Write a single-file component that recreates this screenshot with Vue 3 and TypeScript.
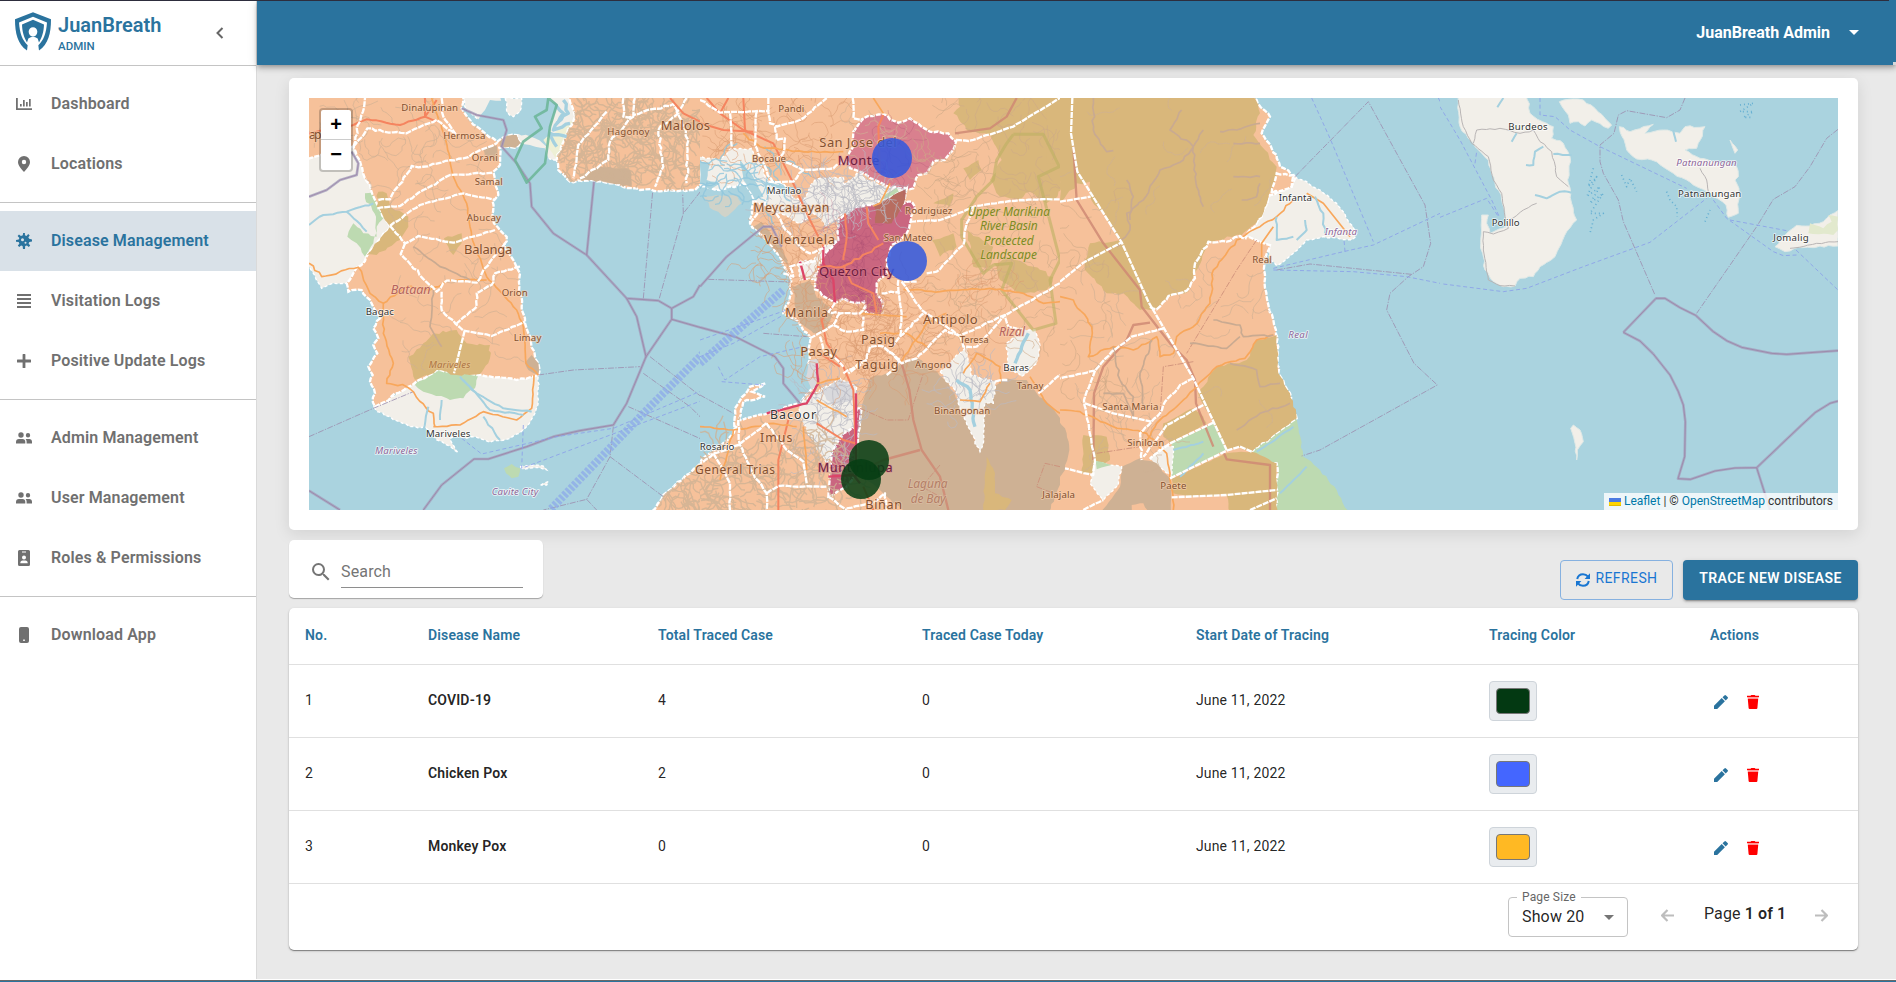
<script setup lang="ts">
type Shape = [kind: string, points: string, jitter?: number]
type Label = [text: string, x: number, y: number, width: number, size: number, tone?: string]
interface Tile { id: string; x: number; w: number; bg: string; areas: Shape[]; lines: Shape[]; labels: Label[]; texture: [number, number, number, number, number, string?][]; textureClip: string }

/* Deterministic noise keeps coastlines and streams stable between renders. */
function noise(a: number, b: number): number {
  const v = Math.sin(a * 12.9898 + b * 78.233) * 43758.5453
  return v - Math.floor(v) - 0.5
}

function trace(points: string, jitter: number, closed: boolean): string {
  const n = points.trim().split(/\s+/).map(Number)
  const p: [number, number][] = []
  for (let i = 0; i < n.length; i += 2) p.push([n[i], n[i + 1]])
  let d = `M${p[0][0]} ${p[0][1]}`
  const count = closed ? p.length : p.length - 1
  for (let i = 0; i < count; i++) {
    const a = p[i]
    const b = p[(i + 1) % p.length]
    const len = Math.hypot(b[0] - a[0], b[1] - a[1])
    const parts = jitter ? Math.max(1, Math.round(len / 14)) : 1
    for (let k = 1; k < parts; k++) {
      const x = a[0] + ((b[0] - a[0]) * k) / parts
      const y = a[1] + ((b[1] - a[1]) * k) / parts
      d += `L${(x + noise(x, y) * jitter).toFixed(1)} ${(y + noise(y, x) * jitter).toFixed(1)}`
    }
    d += `L${b[0]} ${b[1]}`
  }
  return closed ? d + 'Z' : d
}

function streams(x0: number, y0: number, x1: number, y1: number, count: number): string {
  let d = ''
  for (let i = 0; i < count; i++) {
    let x = x0 + (noise(i + x0, 3.1) + 0.5) * (x1 - x0)
    let y = y0 + (noise(i + y0, 7.7) + 0.5) * (y1 - y0)
    let dir = noise(i, x0 + y1) * 6.3
    d += `M${x.toFixed(0)} ${y.toFixed(0)}`
    for (let k = 0; k < 9; k++) {
      dir += noise(i * 3 + k, x0) * 1.9
      x += Math.cos(dir) * 12
      y += Math.sin(dir) * 12
      d += `L${x.toFixed(0)} ${y.toFixed(0)}`
    }
  }
  return d
}

const bataan = '40 40 522 40 515 85 540 120 585 160 622 185 650 168 680 165 692 188 675 203 628 203 630 255 610 275 615 300 625 345 608 365 612 430 650 470 645 505 670 540 690 580 688 620 695 680 705 715 715 760 735 830 745 850 745 885 680 900 560 885 440 870 255 980 248 960 255 940 240 905 248 885 235 860 262 820 250 795 265 775 250 745 270 715 240 660 215 630 175 635 170 610 300 440 260 370 190 200 40 240'
const hagonoy = '832 40 855 110 825 170 800 240 805 270 840 305 905 300 960 310 1050 330 1150 332 1215 330 1240 300 1250 40'
const cavite = '1080 1310 1120 1245 1200 1180 1245 1130 1270 1100 1270 1310'
const mainland = '-20 40 570 40 630 110 605 160 650 225 660 260 708 290 695 320 630 345 605 410 555 470 630 495 610 540 620 650 640 720 655 800 655 880 690 940 692 980 710 1015 575 1115 590 1140 650 1150 650 1310 -20 1310'

const tiles: Tile[] = [
  {
    id: 'west', x: 290, w: 1230, bg: '#aad3df',
    textureClip: [bataan, hagonoy, cavite].map((s) => trace(s, 7, true)).join(''),
    areas: [
      ['land', '40 235 190 200 260 370 300 440 170 610 130 610 95 625 57 560 40 560', 7],
      ['green', '225 340 265 335 290 400 260 440 250 490 225 530 200 490 172 470 190 430 220 460 260 470 258 410 225 355', 8],
      ['land', '250 980 440 870 745 885 745 960 735 1000 700 1050 660 1075 600 1087 545 1070 480 1075 505 1118 440 1080 410 1045 360 1040 300 1010 262 995', 8],
      ['green', '375 915 440 870 565 885 555 925 520 955 480 960 400 935', 8],
      ['land', '510 40 840 40 855 110 820 180 800 240 775 235 700 195 650 140 560 115 530 90', 10],
      ['water', '600 60 660 70 690 160 640 180 560 130 585 90', 8],
      ['water', '630 50 645 100 680 160 735 175 770 200 780 150 800 80 770 50', 8], ['land', '645 54 695 54 690 95 670 110 650 95', 8],
      ['water', '690 190 765 205 780 250 710 310 675 240', 3],
      ['marsh', '760 180 850 120 825 200 800 240', 4],
      ['orange', bataan, 7], ['orange', hagonoy, 7], ['orange', cavite, 7],
      ['tan', '265 335 290 340 300 380 355 410 355 440 330 480 260 525 230 525 300 440 260 380', 9],
      ['tan', '375 900 355 830 400 790 430 760 500 750 530 790 600 795 600 835 570 882 500 885 440 870', 9],
      ['tan', '462 475 515 460 515 490 490 525 475 500', 7],
      ['lake', '628 185 650 168 680 165 692 188 675 203 630 200', 5],
      ['lake', '580 205 620 195 625 245 585 225', 5], ['lake', '865 298 930 260 1020 270 1025 320 960 308 905 300', 8],
      ['lake', '705 850 725 825 745 850 745 885 715 870', 4],
      ['green', '642 1165 665 1152 690 1165 685 1190 665 1195 648 1180', 5],
      ['land', '690 1160 730 1155 760 1158 770 1170 740 1162 700 1168', 2], ['land', '752 1215 775 1205 770 1215', 2],
    ],
    lines: [
      ['water2', '790 70 820 100 790 150 840 130', 8], ['water2', '800 200 780 160 830 170', 8], ['water2', '820 60 835 100 800 130', 8],
      ['admin', '57 350 110 330 150 300 200 285 205 250 185 215'], ['admin', '515 85 560 105 640 120 650 150 635 200 680 250 720 310 725 380 790 460 890 525 1010 655 1105 662 1145 685 1210 650 1230 615'],
      ['admin', '890 525 912 305'], ['admin', '1010 655 1040 710 1068 830 1145 718 1145 685'], ['admin', '1145 718 1240 745'],
      ['admin', '1068 830 1010 970 970 1035 870 1052 790 1070 710 1100 595 1137 552 1137 455 1215 400 1290'], ['admin', '57 1232 150 1290'],
      ['park', '775 54 800 75 780 140 765 250 710 308 675 240 700 185 755 145 735 110 770 90 775 54'],
      ['thin', '57 1070 250 985 370 935'], ['thin', '745 885 850 870 1050 860'], ['thin', '1060 655 1088 335'], ['thin', '1108 655 1180 400 1235 330'], ['thin', '1180 400 1178 340'],
      ['thin', '1080 830 1240 955'], ['thin', '1060 880 1200 980 1240 1020'], ['thin', '1015 980 1240 1080'], ['thin', '970 1040 960 1130 1120 1250'], ['thin', '960 1130 890 1258 760 1290'], ['thin', '890 1258 920 1290'],
      ['ferry', '515 1075 575 1122 800 1070 970 1045 1240 930'], ['ferry', '700 1035 695 1165 1240 960'],
      ['lane', '1240 820 1080 980 780 1290'],
      ['hwy', '57 160 190 135 230 118 330 135 405 110 440 60', 4], ['hwy', '405 54 405 110 440 125'], ['road', '425 54 465 170 490 290 530 370 545 470 590 590 680 690 700 740 708 850 745 885', 3],
      ['road', '57 550 95 590 205 562 240 640 280 670 280 760 310 850 290 910 350 920 430 1000 435 1040', 8], ['road', '280 670 350 620 420 630 480 600 590 600', 6], ['road', '430 1040 510 1035 580 995 680 1020 725 985 732 885', 3],
      ['river', '57 435 100 405 170 395 250 370', 5], ['river', '170 395 230 455', 5], ['river', '510 890 560 940 640 985 725 995', 6], ['river', '400 1050 415 980', 3], ['river', '450 1020 455 960', 3], ['river', '580 1010 630 1080', 4], ['river', '520 900 600 990 700 1005', 5],
      ['brown', '430 630 420 740 455 800', 5], ['brown', '370 500 450 560 540 600', 4],
      ['bound', '190 200 232 145 280 155 350 160 440 120 500 165', 6], ['bound', '190 200 225 54', 7], ['bound', '265 360 300 358 365 258 385 262 520 235 622 188', 6], ['bound', '262 385 330 378 400 330 480 285 610 278', 5], ['bound', '300 438 390 375 520 340 615 360', 4],
      ['bound', '300 438 345 490 385 468 490 488 615 450', 3], ['bound', '345 490 332 522 440 635 470 602 560 608 600 545 645 490', 6], ['bound', '455 635 455 690 520 752 605 768 705 725', 4], ['bound', '690 560 615 580 605 615 560 640 560 680 500 730', 5], ['bound', '524 752 492 880'],
      ['bound', '950 95 865 195 850 295', 5], ['bound', '1000 54 1000 110 1030 110 960 185 955 240 870 295', 6], ['bound', '1035 54 1030 105 1150 72 1165 100 1105 150 1120 260 1095 320', 7], ['bound', '1190 54 1160 95 1195 180 1190 310', 7], ['bound', '455 54 460 110 495 160', 6],
      ['red2', '1140 54 1180 100 1240 130'],
    ],
    texture: [[200, 60, 600, 440, 42], [300, 460, 680, 820, 26], [810, 60, 1240, 320, 220, 'dense'], [1100, 1130, 1240, 1290, 40, 'dense'], [60, 60, 220, 200, 8]],
    labels: [
      ['Dinalupinan', 334, 94, 170, 29, 'warm'], ['Hermosa', 460, 176, 126, 29, 'warm'], ['Orani', 545, 243, 78, 29, 'warm'], ['Samal', 554, 315, 84, 29, 'warm'], ['Abucay', 530, 424, 103, 29, 'warm'], ['Balanga', 522, 522, 145, 39, 'warm'], ['Orion', 635, 649, 78, 29, 'warm'], ['Bagac', 227, 705, 85, 29, 'dark'], ['Limay', 671, 782, 83, 29, 'warm'], ['Bataan', 302, 642, 120, 38, 'rose'], ['Mariveles', 416, 863, 125, 29, 'sand'], ['Mariveles', 408, 1070, 133, 29, 'dark'], ['Mariveles', 255, 1121, 127, 29, 'purple'], ['Cavite City', 605, 1244, 140, 29, 'purple'], ['Hagonoy', 952, 166, 126, 29, 'warm'], ['ap', 57, 177, 38, 37, 'warm'],
    ],
  },
  {
    id: 'metro', x: 700, w: 1080, bg: '#f6c19a', textureClip: 'M0 54H1080V1290H0Z',
    areas: [
      ['tan', '770 40 1090 40 1090 330 1040 370 990 335 960 360 900 350 870 300 905 240 870 165 800 150 760 100 780 80', 9],
      ['tan', '790 265 835 240 845 270 810 300', 7], ['tan', '695 480 760 460 770 500 720 530', 9], ['tan', '880 550 930 530 1000 560 1060 590 1040 630 960 640 900 600', 10], ['tan', '800 450 880 500 870 560 820 560', 9], ['tan', '700 370 760 340 750 380', 8],
      ['land', '-10 230 60 240 95 205 155 205 175 240 205 310 250 310 300 370 345 300 430 290 430 320 470 280 550 318 620 325 600 350 530 378 470 380 410 415 380 440 340 400 300 430 240 400 160 360 140 340 60 330 -10 315', 9],
      ['bay', '-10 315 60 330 130 310 155 340 160 370 150 430 190 470 245 540 270 590 275 640 250 700 290 720 330 770 325 850 345 920 300 970 205 1000 110 1020 100 1060 30 1120 -10 1150', 7],
      ['shallow', '8 350 110 345 125 370 75 412 40 390', 7],
      ['water', '0 245 30 250 20 300 60 310 30 330 0 310', 5], ['water', '120 240 160 290 190 350 165 360 130 300', 6],
      ['land', '370 500 412 480 365 545 345 600 300 600 295 545 340 540', 6], ['green', '548 350 590 322 600 345 552 372', 4],
      ['orange', '100 1060 105 985 150 920 195 910 155 935 195 950 130 965 115 1030', 5],
      ['lake', '160 440 185 425 245 500 270 560 240 530 200 470', 4], ['lake', '275 620 330 600 345 640 400 700 380 750 340 760 300 730', 9],
      ['grey', '330 840 355 835 355 910 335 930 318 890', 3],
      ['land', '360 930 420 895 470 920 468 1040 430 1060 395 1120 380 1150 330 1070 300 1000 300 970 340 940', 6],
      ['grey', '365 935 420 898 462 922 460 960 400 975 380 960', 5],
      ['red', '460 155 490 115 550 103 595 128 630 115 690 155 745 160 768 185 760 210 735 240 700 245 680 280 655 285 640 325 600 325 550 312 500 285 450 265 438 240 460 200', 7],
      ['crimson', '620 325 612 370 635 365 645 380 630 430 620 460 600 480 575 495 560 540 560 580 530 610 530 640 550 680 545 705 500 700 492 665 460 668 430 655 405 668 345 628 350 580 370 530 415 480 415 420 470 380 520 375', 7],
      ['umber', '520 377 618 328 612 370 595 400 575 430 525 430 528 400', 5],
      ['lake', '605 850 650 835 700 870 740 900 790 990 840 1115 855 970 880 920 920 895 980 900 1010 940 1050 975 1085 1020 1085 1200 1045 1300 620 1300 550 1240 475 1180 475 1080 485 980 510 895 560 880', 6],
      ['crimson', '470 985 485 985 470 1100 470 1180 440 1220 385 1250 390 1190 395 1120 430 1060 465 1040', 4],
      ['land', '720 875 800 800 812 885 885 905 880 970 855 970 850 1090 840 1115 780 985 770 940', 7], ['land', '920 790 960 750 1005 750 1020 800 1010 850 965 890 925 860', 6],
      ['tan', '860 1130 885 1180 885 1240 935 1260 915 1290 850 1290 855 1180', 6], ['tan', '1040 40 1085 40 1085 250 1040 250', 4],
    ],
    lines: [
      ['water2', '945 850 965 800 985 760', 6], ['water2', '770 900 810 930 825 1040', 7], ['water2', '200 310 250 325 300 330', 9],
      ['admin', '0 620 80 530 190 440 215 440 245 500'], ['admin', '0 742 110 772 225 830 250 865 250 910 300 970'],
      ['lane', '0 850 250 630'], ['ferry', '0 830 100 790 250 705'], ['ferry', '0 780 260 690'], ['ferry', '55 860 75 900 180 830 310 800'], ['ferry', '65 905 190 915'], ['thin', '25 598 270 606'], ['thin', '0 945 100 1000'], ['thin', '190 760 320 770'],
      ['brownadmin', '605 850 628 930 640 1020 665 1110 720 1190 745 1290'], ['brownadmin', '485 1170 550 1140 660 1110'], ['thinbrown', '480 985 560 1020 625 1020 670 880'], ['thinbrown', '1080 1160 1035 1150 1010 1220 1060 1240'], ['thinbrown', '720 1155 665 1220 720 1250'],
      ['brownadmin', '765 160 870 145 920 110 950 54'],
      ['park2', '940 163 1030 163 1078 260 1015 290 1080 540 1050 600 1068 730 1000 750 905 630 935 550 880 555 850 580 785 470 785 420 830 350 880 300 890 240 920 190 940 163'],
      ['hwy', '20 54 60 100 130 150 220 190 275 300 330 420 370 500'], ['hwy', '60 100 85 54'], ['hwy', '130 54 135 150'], ['hwy', '0 130 70 150 160 155'], ['hwy', '540 280 535 140 550 105'],
      ['motor', '370 500 370 550 400 600 405 668'], ['hwy', '405 668 365 720 380 790 430 860 460 930 470 1180'], ['motor', '468 940 468 1190'], ['motor', '300 545 315 600'], ['motor', '350 850 355 910 320 970 280 980 200 1000', 3], ['motor', '385 1190 460 1185 480 1210'],
      ['hwy', '350 560 430 560 500 520 550 490', 6], ['hwy', '430 555 455 610 520 640 530 700'], ['hwy', '435 400 440 470 430 540', 3], ['hwy', '500 380 505 430 535 480'], ['hwy', '350 1030 430 1080 465 1090'], ['hwy', '265 1020 235 1140 235 1290'],
      ['hwy', '360 820 420 860'], ['hwy', '490 1220 520 1290'], ['road', '130 160 180 200 310 215 430 215', 6], ['road', '350 910 420 895', 3], ['road', '610 628 720 635 870 625 970 640 1030 670 1080 665', 5], ['road', '600 850 680 730 740 700', 5], ['road', '540 760 620 760 680 800', 5], ['road', '790 880 830 820 900 860 900 910', 5], ['road', '780 960 840 965 870 910', 4], ['road', '990 890 1040 970 1080 1000', 4],
      ['road', '350 960 440 1010', 3], ['road', '0 1040 100 1050 220 1030 290 1040', 4], ['road', '100 1050 60 1200', 5], ['road', '310 1040 320 1170', 4], ['road', '480 700 620 710', 3], ['road', '520 54 550 100'], ['road', '570 310 540 370 520 378'],
      ['bound', '0 60 60 98 205 92 210 130 230 140 300 120 380 54', 5], ['bound', '90 100 95 200', 4], ['bound', '170 95 165 195 200 270 220 310', 8], ['bound', '205 54 205 95'], ['bound', '225 140 230 180 255 175 250 220 230 235 310 270 400 265 438 240', 7], ['bound', '310 270 280 305 205 305', 5],
      ['bound', '458 54 460 115 490 118', 4], ['bound', '768 180 805 183 940 140 1080 54', 3], ['bound', '630 425 720 420 830 378 960 360 1080 358', 3], ['bound', '825 378 800 430 790 495 710 575 680 580', 5],
      ['bound', '605 605 665 690 780 768 915 705 1080 610', 4], ['bound', '780 768 790 800 830 800 915 705 925 740 975 750', 4], ['bound', '780 768 735 750 650 835 605 850 555 805', 5], ['bound', '670 700 595 775 575 800', 5], ['bound', '545 640 595 635 605 700 600 770', 6], ['bound', '595 600 595 640', 4], ['bound', '650 605 605 605'],
      ['bound', '405 668 385 695 420 700 480 700 495 680', 6], ['bound', '420 700 400 735 440 755 490 750 490 710', 5], ['bound', '330 775 400 735', 3], ['bound', '360 770 370 810 400 830 430 860', 4], ['bound', '430 880 500 840 510 800 550 800 600 840 560 885', 7], ['bound', '500 840 445 880', 3],
      ['bound', '1015 940 1080 885', 4], ['bound', '885 905 922 900', 4], ['bound', '200 1030 260 1110 310 1145 320 1210', 5], ['bound', '200 1030 115 1095 40 1120 0 1150', 5], ['bound', '115 1020 120 1095 160 1180 200 1240 200 1290', 6], ['bound', '40 1120 90 1210 90 1290', 5], ['bound', '200 1240 235 1218 380 1220', 3], ['bound', '385 1250 440 1290', 5], ['bound', '440 1285 520 1270 555 1240 560 1290', 6],
      ['bound', '220 380 250 440 300 500 330 520 370 505', 6], ['bound', '150 430 200 360', 6], ['bound', '250 580 280 590 270 560 350 540', 6],
    ],
    texture: [[20, 60, 420, 280, 65, 'street'], [200, 330, 600, 430, 50, 'urban'], [380, 430, 520, 670, 60, 'maroon'], [490, 150, 700, 280, 14, 'maroon'], [320, 900, 470, 1130, 60, 'urban'], [10, 240, 250, 350, 24, 'streamlet'], [350, 300, 540, 370, 50, 'urban'], [650, 60, 1070, 820, 125, 'thinner'], [280, 620, 620, 900, 110, 'street'], [0, 1080, 450, 1290, 130, 'dense'], [620, 580, 900, 830, 40, 'street'], [730, 860, 880, 990, 25, 'urban'], [430, 130, 600, 240, 10], [480, 640, 620, 900, 40, 'street'], [160, 430, 370, 600, 45, 'street']],
    labels: [
      ['Malolos', -118, 149, 148, 39, 'warm'], ['Pandi', 235, 97, 78, 29, 'warm'], ['San Jose del', 358, 200, 232, 39, 'warm'], ['Monte', 413, 254, 125, 39, 'wine'], ['Bocaue', 156, 246, 102, 29, 'warm'], ['Marilao', 200, 343, 104, 29, 'dark'], ['Meycauayan', 160, 396, 228, 37, 'warm'], ['Valenzuela', 192, 493, 213, 39, 'warm'], ['Quezon City', 357, 589, 225, 39, 'wine'], ['San Mateo', 551, 482, 147, 29, 'warm'], ['Rodriguez', 615, 402, 142, 29, 'warm'], ['Manila', 256, 712, 128, 37, 'warm'], ['Pasay', 301, 829, 110, 39, 'warm'], ['Pasig', 483, 791, 102, 38, 'warm'], ['Taguig', 466, 867, 130, 38, 'warm'], ['Antipolo', 669, 731, 164, 39, 'warm'], ['Teresa', 779, 788, 87, 29, 'warm'], ['Rizal', 897, 769, 78, 37, 'rose'], ['Angono', 645, 863, 110, 29, 'warm'], ['Baras', 910, 872, 77, 29, 'dark'], ['Tanay', 950, 926, 80, 29, 'warm'], ['Binangonan', 702, 1001, 169, 29, 'warm'], ['Bacoor', 210, 1018, 138, 37, 'dark'], ['Imus', 180, 1086, 97, 37, 'warm'], ['Rosario', -1, 1110, 104, 29, 'dark'], ['General Trias', -15, 1182, 240, 36, 'warm'], ['Muntinlupa', 353, 1176, 225, 38, 'wine'], ['Biñan', 496, 1287, 110, 38, 'warm'], ['Laguna', 623, 1225, 120, 36, 'clay'], ['de Bay', 632, 1268, 105, 36, 'clay'], ['Jalajala', 1027, 1253, 98, 29, 'warm'],
      ['Upper Marikina', 803, 408, 247, 36, 'olive'], ['River Basin', 840, 451, 173, 36, 'olive'], ['Protected', 851, 494, 150, 36, 'olive'], ['Landscape', 841, 537, 170, 36, 'olive'],
    ],
  },
  {
    id: 'east', x: 1060, w: 1140, bg: '#aad3df', textureClip: trace(mainland, 7, true),
    areas: [
      ['land', '705 290 740 305 780 330 830 370 890 460 875 480 790 470 740 480 700 520 650 557 630 540 630 495 555 470 605 410 630 345', 6],
      ['green', '575 1115 710 1015 730 1130 780 1170 830 1230 870 1310 640 1310 650 1150 590 1140', 6],
      ['orange', mainland, 7],
      ['tan', '-10 40 575 40 600 100 580 165 615 210 650 260 650 300 625 350 605 410 545 465 445 485 400 590 385 635 325 650 290 685 240 690 190 640 140 640 75 570 75 540 90 490 180 480 130 400 90 350 90 305 50 310 0 365', 9],
      ['orange', '650 280 700 285 695 320 635 340', 6],
      ['tan', '650 765 655 880 690 940 710 1015 575 1115 535 1100 500 1110 460 1025 415 940 470 860 560 840 590 780', 9],
      ['tan', '310 1030 400 985 430 1010 440 1030 330 1090 310 1070', 7], ['tan', '70 1065 140 1070 150 1140 105 1180 65 1180', 7], ['tan', '335 1195 500 1120 575 1115 650 1150 650 1300 510 1300 500 1245 390 1250 340 1240', 5],
      ['green', '460 1030 500 1110 330 1195 335 1170 335 1090', 4], ['land', '270 1135 315 1095 340 1100 335 1190 305 1165', 4],
      ['lake', '185 1160 240 1135 290 1150 330 1195 335 1310 270 1300 250 1270 215 1275 215 1300 120 1300 180 1220', 5], ['lake', '-10 1010 20 1060 28 1110 15 1170 -10 1200', 6],
      ['land', '105 1145 185 1160 175 1215 130 1260 90 1210', 5], ['green', '105 1142 155 1155 110 1168', 3],
    ],
    lines: [
      ['thin', '705 290 925 65 1095 375 1112 490 1090 560 1045 590 990 640 980 690 1062 850 1132 915 780 1110 725 1128'], ['thin', '650 570 750 552 1055 583'],
      ['ferry', '755 54 810 175 940 485'], ['ferry', '1135 54 1195 175'], ['ferry', '640 565 850 515 940 495 1140 400'], ['ferry', '640 570 880 575 1040 590 1140 610'], ['ferry', '855 515 852 480'],
      ['brownadmin', '40 200 50 360 130 490 240 630 245 680 330 790 380 840 405 900 408 970 460 1100'], ['brownadmin', '270 728 220 735 200 780 130 860 102 940 100 1140'], ['brownadmin', '490 1115 500 1138 630 1155 630 1290'], ['thinbrown', '590 480 530 570 380 820'], ['thinbrown', '400 845 310 860 300 1010'], ['thinbrown', '110 1120 240 1100'],
      ['road', '0 650 40 660 95 740 85 830 160 800 220 810 290 770 300 830 340 820 350 770 400 740 450 670 460 570 530 480 600 440 650 410 700 360', 8], ['road', '740 340 790 370 870 470'], ['road', '605 540 605 490 640 440'], ['road', '640 765 590 780 555 835 470 860 400 930 350 980 290 1030 250 1100', 6], ['road', '0 990 60 995 160 1040 260 1060 320 1120 330 1180 340 1290', 6],
      ['river', '765 350 790 400 795 460', 8], ['river', '650 410 650 480 700 470', 10], ['river', '735 420 740 450 710 480', 9], ['river', '340 1110 430 1085', 4], ['river', '360 1190 430 1120', 3], ['river', '590 1115 700 1040', 4], ['river', '660 1240 740 1160', 3],
      ['brown', '100 54 100 150 140 215 160 212', 8], ['brown', '365 90 330 150 400 200 370 240 300 270 250 360 200 400 210 450 170 500', 8], ['brown', '430 150 400 200 410 320 430 380', 8], ['brown', '200 300 220 350 210 420', 7], ['brown', '600 130 530 150 480 155', 6], ['brown', '600 190 520 190', 5], ['brown', '520 290 600 290', 6], ['brown', '545 360 590 350 600 310', 6], ['brown', '530 1050 600 1000 690 970', 6], ['brown', '510 850 590 870 600 920 660 910', 6], ['brown', '460 720 540 735 550 770 640 765', 7], ['brown', '390 790 500 805 540 770', 6],
      ['brown', '160 800 180 900 220 950 220 1010', 7], ['brown', '275 780 240 880 250 980', 7], ['brown', '130 940 190 940 220 1010', 6],
      ['bound', '37 54 33 160 52 275 185 487 265 665 400 895 500 1110'], ['bound', '0 365 92 350'], ['bound', '0 605 70 548 185 487'], ['bound', '270 680 290 688 325 648 380 632 405 595 405 550 445 485 500 485 540 468 560 475', 7], ['bound', '312 745 215 770 155 815 105 872 0 895', 3], ['bound', '105 872 72 960 105 1145 100 1185 15 1165', 3], ['bound', '75 970 160 1000 275 1025'], ['bound', '400 895 360 915 315 965 300 1000 275 1025 240 1060 245 1140', 5], ['bound', '430 975 320 1035 250 1130', 4],
      ['bound', '460 1028 330 1090 270 1135'], ['bound', '330 1195 500 1112 540 1100 575 1115'], ['bound', '335 1252 500 1245 650 1230'], ['bound', '570 1290 650 1255'], ['bound', '70 1290 130 1260', 3],
    ],
    texture: [[20, 580, 600, 1000, 28], [10, 60, 600, 450, 12], [0, 360, 170, 1000, 22, 'thinner'], [130, 980, 300, 1120, 20], [560, 570, 640, 700, 6]],
    labels: [['Infanta', 656, 364, 100, 29, 'dark'], ['Infanta', 794, 465, 97, 29, 'purple'], ['Real', 577, 549, 58, 29, 'warm'], ['Real', 685, 773, 58, 29, 'purple'], ['Santa Maria', 127, 991, 168, 29, 'warm'], ['Siniloan', 202, 1099, 111, 29, 'warm'], ['Paete', 301, 1228, 78, 29, 'warm']],
  },
  {
    id: 'polillo', x: 1440, w: 1194, bg: '#aad3df', textureClip: 'M0 0',
    areas: [
      ['isle', '52 40 60 140 105 200 145 240 165 310 185 360 195 410 200 440 150 460 140 430 145 405 125 405 122 490 135 570 155 600 190 620 225 618 240 595 280 590 300 560 345 530 380 455 410 420 395 370 385 310 390 230 370 190 335 175 340 140 320 130 270 100 260 40', 7],
      ['isle', '358 65 385 58 430 60 465 85 515 135 505 145 455 120 435 138 415 125 390 130 385 105', 5],
      ['isle', '538 140 570 155 640 133 615 160 670 150 720 160 735 140 795 140 770 205 735 210 780 235 890 260 895 290 885 300 897 325 895 400 865 412 858 375 810 340 760 315 700 280 635 240 590 237 560 210', 6],
      ['isle', '870 180 893 210 885 220', 2], ['isle', '1194 392 1170 405 1150 425 1110 438 1070 436 1040 460 1005 500 1035 515 1075 502 1194 498', 5], ['moss', '1194 410 1165 405 1175 425 1150 445 1110 430 1105 460 1180 465 1194 450', 5],
      ['isle', '392 1045 400 1035 420 1050 430 1085 412 1110 410 1140 405 1090', 4],
    ],
    lines: [
      ['admin', '550 757 648 655 675 655 720 683 767 706 820 755 860 782 905 802 995 820 1040 823 1194 812'], ['admin', '550 757 600 783 640 822 690 885 715 935 730 975 736 1025 734 1130 714 1196 752 1198 825 1173 885 1164 950 1163 1085 1035 1125 998 1170 970 1194 963'], ['admin', '950 1163 990 1290'],
      ['thin', '735 54 720 90 680 113 560 92 535 105 522 160 480 195 480 245 490 280 535 360 550 425 645 645'], ['thin', '1194 148 1160 175 1110 260 1065 320 1000 358 950 440 770 700'],
      ['ferry', '0 80 60 180 155 360 180 415'], ['ferry', '0 412 140 355 175 410'], ['ferry', '105 250 110 215'], ['ferry', '10 612 190 635 260 625 430 560 630 487 800 355'], ['ferry', '300 54 300 105 345 110 390 150 480 200 740 325'], ['ferry', '820 360 860 415 1000 515 1030 527 1070 525'], ['ferry', '870 420 1040 452'], ['ferry', '1068 510 1194 630'],
      ['track', '55 60 70 140 95 190 145 230 160 300 185 340 195 410 205 445 160 462 130 455 130 510 145 600 180 617 225 618', 3], ['track', '100 190 110 150 180 145 240 160 280 150 300 185 335 215 350 290 385 320', 6], ['track', '205 420 250 390 290 370', 5], ['track', '780 265 800 300 805 335', 4], ['track', '1050 505 1130 490 1194 485', 4],
      ['river', '285 345 320 355 360 335 395 338', 4], ['river', '310 200 285 215 280 255 258 255', 4], ['river', '215 185 230 160', 3], ['river', '190 54 172 82', 3], ['river', '340 222 395 225', 3], ['river', '700 150 708 185', 3],
      ['shoal', '460 265 445 320 470 290 440 350 480 320 450 370 490 340 450 400 490 400 460 420 450 460'], ['shoal', '545 285 560 320 570 295 590 335'], ['shoal', '900 75 940 70 900 95 940 95 910 112 935 112'], ['shoal', '680 335 690 360 710 380 712 410'], ['shoal', '795 425 810 390'],
    ],
    texture: [],
    labels: [['Burdeos', 205, 149, 118, 29, 'dark'], ['Polillo', 155, 438, 84, 29, 'dark'], ['Patnanungan', 709, 259, 181, 29, 'purple'], ['Patnanungan', 714, 350, 190, 29, 'dark'], ['Jomalig', 1000, 483, 106, 29, 'dark']],
  },
]

const pins = [
  { x: 892, y: 158, color: '#2f57df' }, { x: 907, y: 261, color: '#2f57df' },
  { x: 869, y: 460, color: '#053d13' }, { x: 861, y: 479, color: '#053d13' },
]

const menu = [
  [{ name: 'Dashboard', icon: 'chart' }, { name: 'Locations', icon: 'pin' }],
  [{ name: 'Disease Management', icon: 'virus' }, { name: 'Visitation Logs', icon: 'list' }, { name: 'Positive Update Logs', icon: 'plus' }],
  [{ name: 'Admin Management', icon: 'people' }, { name: 'User Management', icon: 'people' }, { name: 'Roles & Permissions', icon: 'badge' }],
  [{ name: 'Download App', icon: 'phone' }],
]
const active = 'Disease Management'

const icons: Record<string, string> = {
  chart: 'M0 2h1.8v10.3H16V14H0zM4 8h1.7v2.4H4zM7 4h1.7v6.4H7zM10 6h1.7v4.4H10zM13 3h1.7v7.4H13z',
  pin: 'M8 0a6 6 0 0 0-6 6c0 3.600 3 6.600 6 10 3-3.400 6-6.400 6-10a6 6 0 0 0-6-6zm0 8.200A2.200 2.200 0 1 1 8 3.800a2.200 2.200 0 0 1 0 4.400z',
  virus: 'M7.100 0h1.800v2.300l1.600.6 1.700-1.800 1.500 1.300-1.400 1.900.9 1.500L16 6.600v2l-2.700.4-.7 1.600 1.600 1.800-1.400 1.500-1.900-1.500-1.700.7L9 16H7l-.4-2.900-1.500-.6-1.900 1.400-1.400-1.400 1.600-1.800L2.700 9 0 8.700V7l2.700-.5.7-1.600-1.800-2L3 1.500l1.900 1.400 1.900-.7zM6.500 5.200a1.500 1.500 0 1 0 0 3 1.500 1.500 0 0 0 0-3zm3 3.500a1 1 0 1 0 0 2 1 1 0 0 0 0-2z',
  list: 'M1 1h14v2H1zM1 5h14v2H1zM1 9h14v2H1zM1 13h14v2H1z',
  plus: 'M6.600 1.500q0-.5.5-.5h1.800q.5 0 .5.500V6.600h5.100q.5 0 .5.500v1.800q0 .5-.5.500H9.400v5.100q0 .5-.5.500H7.100q-.5 0-.5-.5V9.400H1.500Q1 9.400 1 8.900V7.100q0-.5.500-.5h5.100z',
  people: 'M5 2.300a2.700 2.700 0 1 1 0 5.400 2.700 2.700 0 0 1 0-5.400zM12 3a2.200 2.200 0 1 1 0 4.400A2.200 2.200 0 0 1 12 3zM0 13.500v-1.600Q0 9 3 9h3.500q2.800 0 2.800 2.900v1.600zM10.600 13.500v-2q0-1.400-1-2.500h3.600Q16 9 16 12v1.500z',
  badge: 'M3.500 0h9Q14 0 14 1.500v13q0 1.500-1.500 1.500h-9Q2 16 2 14.500v-13Q2 0 3.500 0zM6 1.400v1h4v-1zm2 4a2 2 0 1 0 0 4 2 2 0 0 0 0-4zM4.300 13.200h7.400q0-2.800-2.400-2.800H6.700q-2.400 0-2.400 2.800z',
  phone: 'M5 0h6q2 0 2 2v12q0 2-2 2H5q-2 0-2-2V2q0-2 2-2zm2.200 12.500v1.600h1.600v-1.600z',
}

const columns = ['No.', 'Disease Name', 'Total Traced Case', 'Traced Case Today', 'Start Date of Tracing', 'Tracing Color', 'Actions']
const rows = [
  { name: 'COVID-19', total: 4, today: 0, start: 'June 11, 2022', color: '#033912' },
  { name: 'Chicken Pox', total: 2, today: 0, start: 'June 11, 2022', color: '#4466ff' },
  { name: 'Monkey Pox', total: 0, today: 0, start: 'June 11, 2022', color: '#ffb923' },
]
</script>

<template>
  <div class="app">
    <aside class="sidebar">
      <div class="brand">
        <svg class="logo" viewBox="45 36 108 116">
          <path d="M99 36L153 57C153 100 145 131 117 151L115 135C131 121 139 98 141 67L99 50 57 67C59 98 67 121 83 135L81 151C53 131 45 100 45 57Z" />
          <path fill-rule="evenodd" d="M99 59L132 73C131 96 127 109 117 127L113 115Q99 104 85 115L81 127C71 109 67 96 66 73ZM99 81a13 14 0 1 0 0 28 13 14 0 0 0 0-28Z" />
        </svg>
        <div class="brand-text"><strong>JuanBreath</strong><span>ADMIN</span></div>
        <svg class="collapse" viewBox="0 0 10 14"><path d="M7.500 2L2.500 7l5 5" /></svg>
      </div>
      <nav>
        <ul v-for="(group, g) in menu" :key="g">
          <li v-for="item in group" :key="item.name" :class="{ active: item.name === active }">
            <svg viewBox="0 0 16 16"><path fill-rule="evenodd" :d="icons[item.icon]" /></svg>
            <span>{{ item.name }}</span>
          </li>
        </ul>
      </nav>
    </aside>

    <div class="main">
      <header class="topbar">
        <span>JuanBreath Admin</span>
        <svg viewBox="0 0 10 5"><path d="M0 0h10L5 5z" /></svg>
      </header>
      <main class="content">
        <section class="map-card">
          <div class="map">
            <svg class="canvas" viewBox="309 98 1529 412">
              <defs>
                <clipPath v-for="t in tiles" :id="'land-' + t.id" :key="t.id"><path :d="t.textureClip" /></clipPath>
              </defs>
              <svg v-for="t in tiles" :key="t.id" :x="t.x" y="80" :width="t.w / 3" height="440" :viewBox="`0 0 ${t.w} 1320`">
                <rect :width="t.w" height="1320" :fill="t.bg" />
                <path v-for="(a, i) in t.areas" :key="'a' + i" class="area" :class="a[0]" :d="trace(a[1], a[2] ?? 0, true)" />
                <g :clip-path="`url(#land-${t.id})`">
                  <path v-for="(s, i) in t.texture" :key="'s' + i" class="texture" :class="s[5]" :d="streams(s[0], s[1], s[2], s[3], s[4])" />
                </g>
                <template v-for="(l, i) in t.lines" :key="'l' + i">
                  <path class="line" :class="l[0]" :d="trace(l[1], l[2] ?? 0, false)" />
                  <path v-if="l[0] === 'admin'" class="line admin-core" :d="trace(l[1], 0, false)" />
                </template>
              </svg>
              <g v-for="t in tiles" :key="'t' + t.id" :transform="`translate(${t.x} 80) scale(.33333)`">
                <text v-for="(l, i) in t.labels" :key="i" :x="l[1]" :y="l[2]" :textLength="l[3]" :font-size="l[4]" :class="l[5]">{{ l[0] }}</text>
              </g>
              <circle v-for="(p, i) in pins" :key="i" :cx="p.x" :cy="p.y" r="20" :fill="p.color" fill-opacity=".85" />
            </svg>
            <div class="zoom"><span>+</span><span>−</span></div>
            <div class="credit">
              <svg viewBox="0 0 12 8"><path fill="#4c7be1" d="M0 0h12v4H0z" /><path fill="#ffd500" d="M0 4h12v3H0z" /><path fill="#e0bc00" d="M0 7h12v1H0z" /></svg>
              <a>Leaflet</a> | © <a>OpenStreetMap</a> contributors
            </div>
          </div>
        </section>

        <div class="toolbar">
          <div class="search">
            <svg viewBox="0 0 24 24"><path d="M15.500 14h-.79l-.28-.27A6.470 6.470 0 0 0 16 9.500 6.500 6.500 0 1 0 9.500 16c1.610 0 3.090-.59 4.230-1.570l.27.28v.79l5 4.990L20.490 19l-4.990-5zm-6 0C7.010 14 5 11.990 5 9.500S7.010 5 9.500 5 14 7.010 14 9.500 11.990 14 9.500 14z" /></svg>
            <span>Search</span>
          </div>
          <div class="buttons">
            <button class="refresh">
              <svg viewBox="0 0 14 14"><path d="M1.200 6C1.800 3 4 1.200 7 1.200c2 0 3.800.9 5 2.500M12.800 8c-.6 3-2.800 4.800-5.800 4.800-2 0-3.800-.9-5-2.500" /><path class="tip" d="M14 .3V6H8.600zM0 13.700V8h5.400z" /></svg>
              REFRESH
            </button>
            <button class="trace">TRACE NEW DISEASE</button>
          </div>
        </div>

        <section class="table-card">
          <div class="row head"><div v-for="c in columns" :key="c">{{ c }}</div></div>
          <div v-for="(r, i) in rows" :key="r.name" class="row">
            <div>{{ i + 1 }}</div>
            <div class="strong">{{ r.name }}</div>
            <div>{{ r.total }}</div>
            <div>{{ r.today }}</div>
            <div>{{ r.start }}</div>
            <div><span class="swatch"><i :style="{ background: r.color }"></i></span></div>
            <div class="actions">
              <svg viewBox="0 0 14 14"><path fill="#2a739e" d="M0 14v-3.200L7.700 3.100l3.200 3.200L3.200 14zM8.500 2.300l1.900-1.900q.8-.7 1.600 0L13.600 2q.8.8 0 1.600l-1.900 1.900z" /></svg>
              <svg class="bin" viewBox="0 0 12 14"><path fill="#f00" d="M0 .8h3.500L4.300 0h3.400l.8.800H12v1.500H0zM.8 4h10.400l-.8 9q-.1 1-1 1H2.600q-.9 0-1-1z" /><path fill="#ff8f8f" d="M.8 2.300h10.400V4H.8z" /></svg>
            </div>
          </div>
          <footer>
            <div class="select">
              <label>Page Size</label><span>Show 20</span>
              <svg viewBox="0 0 10 5"><path d="M0 0h10L5 5z" /></svg>
            </div>
            <svg class="arrow" viewBox="0 0 12 12"><path d="M12 6H1.500M6 1L1 6l5 5" /></svg>
            <p>Page <b>1 of 1</b></p>
            <svg class="arrow" viewBox="0 0 12 12"><path d="M0 6h10.500M6 1l5 5-5 5" /></svg>
          </footer>
        </section>
      </main>
    </div>
    <div class="frame-top"></div>
    <div class="frame-corner"></div>
    <div class="frame-bottom"></div>
  </div>
</template>

<style>
body { margin: 0; overflow: hidden; }
</style>

<style scoped>
.app { position: relative; display: flex; width: 1896px; height: 982px; overflow: hidden; background: #e9e9e9; font-family: Roboto, "Liberation Sans", sans-serif; color: rgba(0, 0, 0, .87); box-sizing: border-box; }
.app * { box-sizing: border-box; }
.sidebar { width: 257px; flex: none; background: #fff; border-right: 1px solid #dadada; }
.brand { height: 66px; display: flex; align-items: flex-start; padding: 12px 0 0 15px; border-bottom: 1px solid #c4c4c4; }
.logo { width: 36px; height: 39px; fill: #2a739e; }
.brand-text { width: 150px; margin-left: 7px; color: #2a739e; }
.brand-text strong { display: block; font-size: 20px; line-height: 24px; font-weight: 600; margin-top: 1px; }
.brand-text span { display: block; font-size: 11.500px; line-height: 18px; font-weight: 500; }
.collapse { width: 10px; height: 14px; margin: 14px 0 0 7px; fill: none; stroke: #666; stroke-width: 2; }
nav ul { list-style: none; margin: 0; padding: 8px 0; border-bottom: 1px solid #c4c4c4; }
nav ul:last-child { border: 0; }
nav li { height: 60px; display: flex; align-items: center; padding-left: 16px; color: #707070; font-size: 16px; font-weight: 600; letter-spacing: .13px; }
nav li svg { width: 16px; height: 16px; fill: currentColor; margin-right: 19px; }
nav li span { position: relative; top: -1px; }
nav li.active { background: #d9e1e8; color: #2a739e; }
.main { flex: 1; min-width: 0; }
.topbar { position: relative; height: 65px; background: #2a739e; color: #fff; display: flex; align-items: center; justify-content: flex-end; padding-right: 37px; font-weight: 700; font-size: 16px; box-shadow: 0 2px 4px -1px rgba(0, 0, 0, .2), 0 4px 5px rgba(0, 0, 0, .14), 0 1px 10px rgba(0, 0, 0, .12); }
.topbar svg { width: 10px; height: 5px; fill: #fff; margin-left: 19px; }
.content { padding: 13px 38px 0 32px; }
.map-card { height: 452px; padding: 20px; border-radius: 5px; background: #fff; box-shadow: 0 4px 16px rgba(0, 0, 0, .1); }
.map { position: relative; height: 412px; overflow: hidden; }
.canvas { display: block; width: 1529px; height: 412px; }
.area { stroke-width: 0; }
.orange { fill: #f6c19a; stroke: #fff; stroke-width: 7; stroke-dasharray: 15 4; }
.land, .isle { fill: #f2efe9; }
.land { stroke: #fff; stroke-width: 4; stroke-dasharray: 9 7; }
.isle { stroke: #dfe9e7; stroke-width: 3; }
.shallow { fill: #d0d3c9; }
.green { fill: #bddab1; }
.moss { fill: #e2e9cd; }
.marsh { fill: #eef0d5; }
.tan { fill: #d9b77b; }
.lake { fill: #ceb194; }
.grey { fill: #d9d9dc; }
.water { fill: #aad3df; }
.bay { fill: #aad3df; stroke: #fff; stroke-width: 7; stroke-dasharray: 12 4; }
.red { fill: #d9808e; stroke: #fff; stroke-width: 7; stroke-dasharray: 14 4; }
.crimson { fill: #ca6680; stroke: #fff; stroke-width: 7; stroke-dasharray: 14 4; }
.umber { fill: #b76d60; }
.texture { fill: none; stroke: #ceb194; stroke-width: 2.400; opacity: .8; }
.texture.dense { stroke-width: 4; }
.texture.thinner { stroke-width: 2.200; stroke: #ceaa87; }
.texture.street { stroke: #d99a72; stroke-width: 2; }
.texture.maroon { stroke: #a94d72; stroke-width: 2; opacity: .4; }
.texture.urban { stroke: #b9b9c2; stroke-width: 2.500; }
.texture.streamlet { stroke: #8fc6dc; stroke-width: 4; }
.line { fill: none; stroke-linejoin: round; }
.bound { stroke: #fff; stroke-width: 7; stroke-dasharray: 18 3; }
.admin { stroke: #a4a0bd; stroke-width: 8; opacity: .8; }
.admin-core { stroke: #9a7ca0; stroke-width: 2; }
.brownadmin { stroke: #cf8a74; stroke-width: 7; opacity: .85; }
.thin { stroke: #9c8fb0; stroke-width: 2.500; stroke-dasharray: 18 4 4 4; }
.thinbrown { stroke: #cb8d78; stroke-width: 2.500; stroke-dasharray: 18 4 4 4; }
.ferry { stroke: #8a9fe9; stroke-width: 2.500; stroke-dasharray: 12 8; }
.lane { stroke: #8aa6ea; stroke-width: 24; stroke-dasharray: 9 5; opacity: .7; }
.road { stroke: #f8a75b; stroke-width: 5; }
.hwy { stroke: #f5845f; stroke-width: 6; }
.red2 { stroke: #f5845f; stroke-width: 6; }
.motor { stroke: #dc4568; stroke-width: 7; }
.river { stroke: #a4d0df; stroke-width: 6; }
.water2 { stroke: #a4d0df; stroke-width: 10; }
.brown { stroke: #c9aa91; stroke-width: 5; }
.park { stroke: #6bb596; stroke-width: 8; opacity: .85; }
.park2 { stroke: #bdb063; stroke-width: 9; opacity: .6; }
.track { stroke: #b9b5b5; stroke-width: 3; }
.shoal { stroke: #65afd2; stroke-width: 5; stroke-dasharray: 3 9; }
.canvas text { font-family: "Noto Sans", sans-serif; paint-order: stroke; stroke-width: 5px; stroke-linejoin: round; }
.dark { fill: #333; stroke: rgba(255, 255, 255, .75); }
.warm { fill: #83502f; stroke: rgba(248, 208, 176, .7); }
.wine { fill: #6b1c40; stroke: rgba(220, 130, 145, .5); }
.olive { fill: #7d8b25; stroke: rgba(238, 200, 150, .6); font-style: italic; }
.purple { fill: #8e6799; stroke: rgba(255, 255, 255, .75); font-style: italic; }
.rose { fill: #b5645e; stroke: rgba(248, 208, 176, .7); font-style: italic; }
.sand { fill: #ac7443; stroke: rgba(235, 200, 150, .5); font-style: italic; }
.clay { fill: #b47f67; stroke: rgba(225, 195, 170, .6); font-style: italic; }
.zoom { position: absolute; left: 10px; top: 10px; width: 34px; height: 64px; border: 2px solid rgba(0, 0, 0, .2); border-radius: 4px; background: #fff; background-clip: padding-box; }
.zoom span { display: block; height: 30px; font: bold 20px/29px "Liberation Sans", sans-serif; color: #000; text-align: center; }
.zoom span:first-child { border-bottom: 1px solid #ccc; }
.credit { position: absolute; right: 0; bottom: 0; height: 17px; padding: 0 5px; background: rgba(255, 255, 255, .8); font-size: 12px; line-height: 16px; color: #333; white-space: nowrap; }
.credit svg { width: 12px; height: 8px; margin-right: 3px; vertical-align: -1px; }
.credit a { color: #0078a8; }
.toolbar { display: flex; justify-content: space-between; align-items: flex-start; margin-top: 10px; height: 68px; }
.search { width: 254px; height: 58px; border-radius: 5px; background: #fff; box-shadow: 0 1px 1px rgba(0, 0, 0, .3); padding: 15px 20px 0 20px; display: flex; }
.search svg { width: 24px; height: 24px; flex: none; fill: #757575; margin-top: 5px; }
.search span { width: 182px; flex: none; margin-left: 8px; height: 33px; border-bottom: 1px solid #8e8e8e; font-size: 16px; line-height: 33px; letter-spacing: .15px; color: #757575; }
.buttons { display: flex; gap: 10px; margin-top: 20px; }
button { height: 40px; border-radius: 4px; border: 0; font: 500 14px/24px Roboto, sans-serif; letter-spacing: .4px; padding: 0 0 4px; }
.refresh { width: 113px; border: 1px solid #86b1e0; background: transparent; color: #1976d2; font-weight: 400; display: flex; align-items: center; justify-content: center; gap: 5px; }
.refresh svg { width: 14px; height: 14px; fill: none; stroke: #1976d2; stroke-width: 2; margin-top: 4px; margin-left: 1px; }
.refresh .tip { fill: #1976d2; stroke: none; }
.trace { width: 175px; background: #2a739e; color: #fff; font-weight: 600; letter-spacing: .36px; box-shadow: 0 3px 1px -2px rgba(0, 0, 0, .2), 0 2px 2px rgba(0, 0, 0, .14), 0 1px 5px rgba(0, 0, 0, .12); }
.table-card { height: 342px; border-radius: 5px; background: #fff; box-shadow: 0 1px 1px rgba(0, 0, 0, .4), 0 1px 3px rgba(0, 0, 0, .15); }
.row { display: grid; grid-template-columns: 123px 230px 264px 274px 293px 221px 1fr; height: 73px; padding-left: 16px; align-items: center; border-bottom: 1px solid #e0e0e0; font-size: 14px; letter-spacing: .15px; }
.row > div { position: relative; top: -1px; }
.head { height: 57px; color: #2a739e; font-weight: 600; }
.strong { font-weight: 600; }
.swatch { display: block; width: 48px; height: 40px; padding: 6px; border: 1px solid #ced4da; border-radius: 4px; background: #e9ecef; position: relative; top: 1px; }
.swatch i { display: block; width: 34px; height: 26px; border: 1px solid #777; border-radius: 4px; }
.actions { display: flex; gap: 19px; padding-left: 4px; padding-top: 4px; }
.actions svg { width: 14px; height: 14px; }
.actions .bin { width: 12px; }
footer { height: 66px; display: flex; align-items: center; justify-content: flex-end; padding-right: 30px; }
.select { position: relative; width: 120px; height: 40px; border: 1px solid #c4c4c4; border-radius: 4px; padding: 0 13px; display: flex; align-items: center; justify-content: space-between; margin-right: 33px; }
.select label { position: absolute; left: 8px; top: -9px; padding: 0 5px; background: #fff; font-size: 12px; line-height: 16px; letter-spacing: .15px; color: #666; }
.select span { position: relative; top: -1px; font-size: 16px; letter-spacing: .15px; }
.select svg { width: 10px; height: 5px; fill: #757575; }
.arrow { position: relative; top: -2px; width: 13px; height: 13px; fill: none; stroke: #bdbdbd; stroke-width: 2; }
footer p { margin: -8px 31px 0 30px; width: 80px; font-size: 16px; letter-spacing: .1px; white-space: nowrap; }
footer b { font-weight: 600; }
.frame-top { position: absolute; top: 0; left: 0; width: 1889px; height: 1px; background: #2d2d3d; }
.frame-corner { position: absolute; top: 62px; right: 0; width: 3px; height: 3px; background: #d5d8da; }
.frame-bottom { position: absolute; left: 0; right: 0; bottom: 0; height: 3px; background: #2a739e; border-top: 1px solid #fff; box-shadow: inset 0 1px #686868; }
</style>
